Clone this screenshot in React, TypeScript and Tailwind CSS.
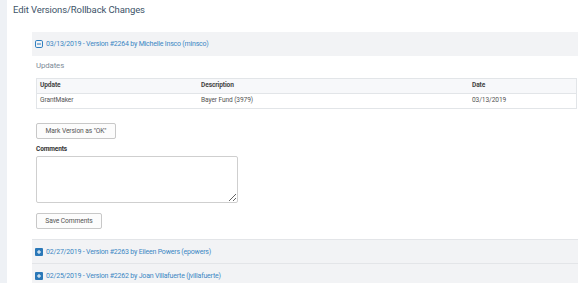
import React from "react";

function MinusIcon() {
  return (
    <svg width="8" height="8" viewBox="0 0 8 8" className="shrink-0">
      <rect x="0.5" y="0.5" width="7" height="7" rx="1.3" fill="none" stroke="#2f7fbf" strokeWidth="1" />
      <rect x="2" y="3.5" width="4" height="1" fill="#2f7fbf" />
    </svg>
  );
}

function PlusIcon() {
  return (
    <svg width="8" height="8" viewBox="0 0 8 8" className="shrink-0">
      <rect x="0" y="0" width="8" height="8" rx="1" fill="#2a78b8" />
      <rect x="2" y="3.5" width="4" height="1" fill="#fff" />
      <rect x="3.5" y="2" width="1" height="4" fill="#fff" />
    </svg>
  );
}

function Header({ open, text }: { open?: boolean; text: string }) {
  return (
    <div
      className={`flex items-center gap-[3px] bg-[#f2f3f5] pl-[3px] text-[7px] tracking-[-0.2px] text-[#3a87c4] ${open ? "h-[24px]" : "h-[23px] pt-[1px]"}`}
    >
      {open ? <MinusIcon /> : <PlusIcon />}
      <span className="whitespace-nowrap">{text}</span>
    </div>
  );
}

export default function App() {
  return (
    <div
      className="flex h-[283px] w-[578px] overflow-hidden bg-white"
      style={{ fontFamily: "Roboto, 'Liberation Sans', sans-serif" }}
    >
      <div className="w-[7px] shrink-0 bg-[#eef1f5]" />
      <div className="flex flex-1 flex-col pl-[6px]">
        <div className="h-[19px] whitespace-nowrap text-[9.5px] leading-[19px] tracking-[-0.1px] text-[#3d5368]">
          Edit Versions/Rollback Changes
        </div>
        <div className="ml-[1px] mt-[8px] h-[2px] bg-[#c9ced3]" />
        <div className="ml-[19px] mt-[5px] flex flex-col">
          <Header open text="03/13/2019 - Version #2264 by Michelle Insco (minsco)" />
          <div className="flex flex-col pl-[4px] pr-[1px]">
            <div className="mt-[3px] h-[14px] text-[7.8px] leading-[14px] tracking-[-0.1px] text-[#7d8b98]">Updates</div>
            <div className="mt-[5px] border border-[#e2e5e8] text-[6.6px] tracking-[-0.1px]">
              <div className="grid h-[15px] grid-cols-[161px_271px_1fr] items-center border-b border-[#e2e5e8] bg-[#f7f8fa] pl-[3px] font-bold text-[#444]">
                <span>Update</span>
                <span>Description</span>
                <span>Date</span>
              </div>
              <div className="grid h-[14px] grid-cols-[161px_271px_1fr] items-center pl-[3px] text-[#555]">
                <span>GrantMaker</span>
                <span>Bayer Fund (3979)</span>
                <span>03/13/2019</span>
              </div>
            </div>
            <button className="mt-[14px] flex h-[16px] w-[80px] items-center justify-center whitespace-nowrap rounded-[2px] border border-[#c8c8c8] bg-[#fcfcfc] text-[6.7px] tracking-[-0.1px] text-[#555]">
              Mark Version as "OK"
            </button>
            <div className="mt-[6px] h-[8px] text-[6.5px] font-bold leading-[8px] tracking-[-0.1px] text-[#333]">Comments</div>
            <textarea className="mt-[3px] h-[47px] w-[202px] resize rounded-[2px] border border-[#cfcfcf] bg-white" />
            <button className="mt-[10px] flex h-[16px] w-[66px] items-center justify-center whitespace-nowrap rounded-[2px] border border-[#c8c8c8] bg-[#fcfcfc] text-[6.7px] tracking-[-0.1px] text-[#555]">
              Save Comments
            </button>
          </div>
          <div className="mt-[10px] border-t border-[#e3e5e8]">
            <Header text="02/27/2019 - Version #2263 by Eileen Powers (epowers)" />
          </div>
          <div className="border-t border-[#e3e5e8]">
            <Header text="02/25/2019 - Version #2262 by Joan Villafuerte (jvillafuerte)" />
          </div>
        </div>
      </div>
    </div>
  );
}
